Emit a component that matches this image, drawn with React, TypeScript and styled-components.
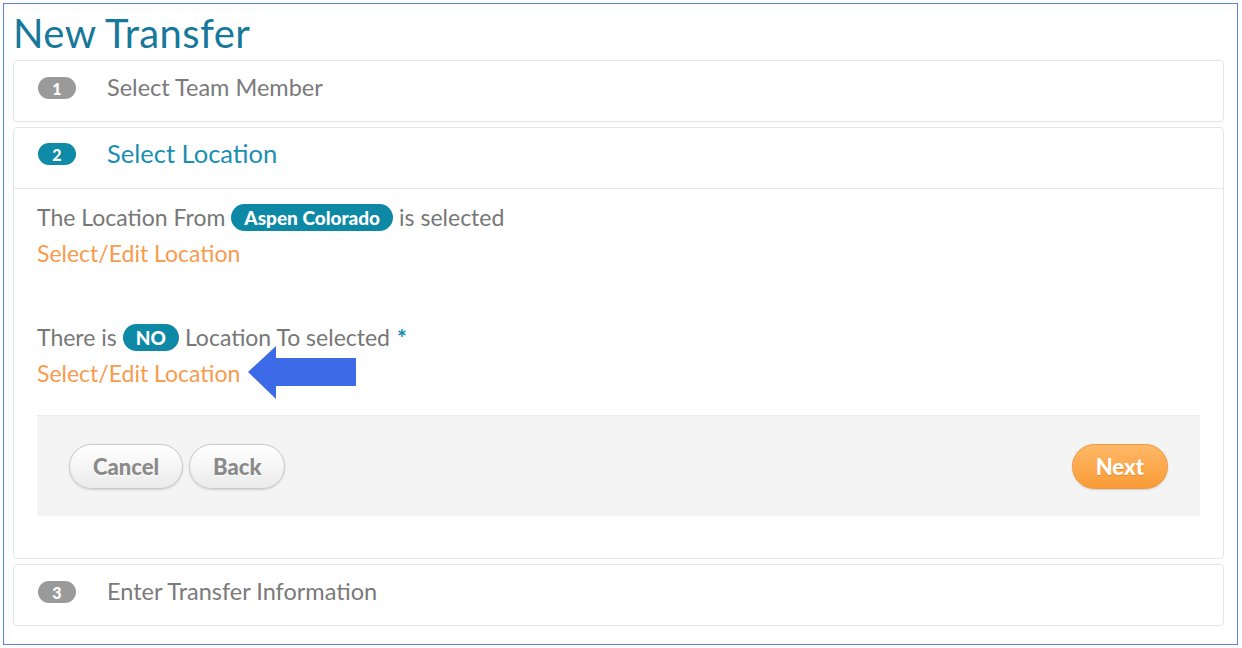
import React from "react";
import styled, { createGlobalStyle } from "styled-components";

const GlobalStyle = createGlobalStyle`
  html, body {
    margin: 0;
    padding: 0;
    background: #ffffff;
  }
  body {
    font-family: Lato, "Open Sans", "Liberation Sans", sans-serif;
  }
`;

const Frame = styled.div`
  box-sizing: border-box;
  margin: 3px 0 0 3px;
  width: 1235px;
  height: 642px;
  border: 1px solid #5b80ef;
  padding: 0 13px 0 9px;
  display: flex;
  flex-direction: column;
`;

const Title = styled.h1`
  margin: 0;
  padding: 5px 0 3px 0;
  height: 56px;
  box-sizing: border-box;
  font-size: 40px;
  font-weight: 400;
  line-height: 48px;
  color: #16789a;
  letter-spacing: 0.4px;
`;

const Panel = styled.section`
  box-sizing: border-box;
  border: 1px solid #e6e6e6;
  border-radius: 4px;
  margin-bottom: 5px;
  background: #fff;
  display: flex;
  flex-direction: column;
`;

const Header = styled.div<{ $divider?: boolean }>`
  box-sizing: border-box;
  height: ${(p) => (p.$divider ? "61px" : "60px")};
  display: flex;
  align-items: center;
  padding: 0 0 ${(p) => (p.$divider ? "8px" : "6px")} 24px;
  border-bottom: ${(p) => (p.$divider ? "1px solid #e6e6e6" : "none")};
  flex-shrink: 0;
`;

const StepBadge = styled.span<{ $active?: boolean }>`
  width: 38px;
  height: 22px;
  border-radius: 11px;
  background: ${(p) => (p.$active ? "#0f8aa7" : "#9a9a9a")};
  color: #fff;
  font-weight: 900;
  font-size: 16px;
  display: flex;
  align-items: center;
  justify-content: center;
  margin-right: 31px;
`;

const StepTitle = styled.span<{ $active?: boolean }>`
  font-size: ${(p) => (p.$active ? "25.5px" : "23.5px")};
  color: ${(p) => (p.$active ? "#1a8fb1" : "#7a7a7a")};
  margin-bottom: ${(p) => (p.$active ? "3px" : "2px")};
`;

const Body = styled.div`
  padding: 10px 23px 42px 23px;
  display: flex;
  flex-direction: column;
`;

const Line = styled.div`
  height: 36px;
  display: flex;
  align-items: center;
  font-size: 23px;
  color: #777777;
  white-space: pre;
`;

const Gap = styled.div`
  height: 48px;
`;

const Pill = styled.span`
  display: inline-flex;
  align-items: center;
  height: 27px;
  padding: 0 13px;
  border-radius: 14px;
  background: #0d89a6;
  color: #fff;
  font-weight: 900;
  font-size: 19px;
  margin: 0 6px;
`;

const Required = styled.span`
  color: #1a8fb1;
  font-weight: 900;
  margin-left: 7px;
`;

const EditLink = styled.a`
  font-size: 23px;
  color: #f89b4e;
  text-decoration: none;
  cursor: pointer;
`;

const LinkRow = styled(Line)`
  gap: 8px;
`;

const ButtonBar = styled.div`
  margin-top: 24px;
  height: 101px;
  box-sizing: border-box;
  background: #f4f4f4;
  border-top: 1px solid #ebebeb;
  display: flex;
  align-items: center;
  padding: 0 32px;
`;

const Button = styled.button<{ $primary?: boolean }>`
  height: 45px;
  border-radius: 23px;
  padding: 0 23px;
  font-family: inherit;
  font-size: 22px;
  font-weight: 900;
  cursor: pointer;
  margin-right: 6px;
  border: 1px solid ${(p) => (p.$primary ? "#f0963a" : "#c9c9c9")};
  color: ${(p) => (p.$primary ? "#ffffff" : "#8a8a8a")};
  text-shadow: ${(p) =>
    p.$primary ? "0 1px 0 rgba(200, 110, 20, 0.5)" : "0 1px 0 #ffffff"};
  background: ${(p) =>
    p.$primary
      ? "linear-gradient(#ffb867, #f99b36)"
      : "linear-gradient(#ffffff, #ebebeb)"};
  box-shadow: 0 1px 2px rgba(0, 0, 0, 0.15);

  &:last-child {
    margin-right: 0;
  }
`;

const Spacer = styled.div`
  flex: 1;
`;

const Arrow = () => (
  <svg width="108" height="54" viewBox="0 0 108 54">
    <polygon points="0,26 28,0 28,12 108,12 108,40 28,40 28,53" fill="#3d6be8" />
  </svg>
);

export default function App() {
  return (
    <>
      <GlobalStyle />
      <Frame>
        <Title>New Transfer</Title>
        <Panel>
          <Header>
            <StepBadge>1</StepBadge>
            <StepTitle>Select Team Member</StepTitle>
          </Header>
        </Panel>
        <Panel>
          <Header $divider>
            <StepBadge $active>2</StepBadge>
            <StepTitle $active>Select Location</StepTitle>
          </Header>
          <Body>
            <Line>
              The Location From<Pill>Aspen Colorado</Pill>is selected
            </Line>
            <Line>
              <EditLink>Select/Edit Location</EditLink>
            </Line>
            <Gap />
            <Line>
              There is<Pill>NO</Pill>Location To selected<Required>*</Required>
            </Line>
            <LinkRow>
              <EditLink>Select/Edit Location</EditLink>
              <Arrow />
            </LinkRow>
            <ButtonBar>
              <Button>Cancel</Button>
              <Button>Back</Button>
              <Spacer />
              <Button $primary>Next</Button>
            </ButtonBar>
          </Body>
        </Panel>
        <Panel>
          <Header>
            <StepBadge>3</StepBadge>
            <StepTitle>Enter Transfer Information</StepTitle>
          </Header>
        </Panel>
      </Frame>
    </>
  );
}
